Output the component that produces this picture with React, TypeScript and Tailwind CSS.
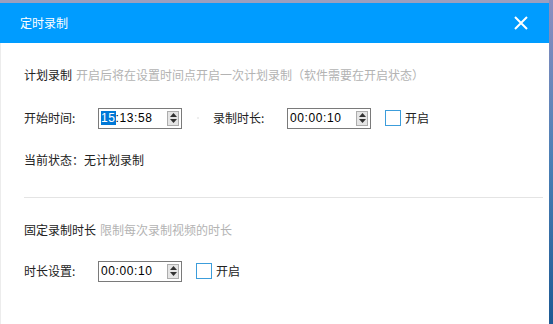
import React from "react";

const font = { fontFamily: '"Noto Sans CJK SC", "Noto Sans", sans-serif' };

function Spin({ value, highlight }: { value: string; highlight?: boolean }) {
  return (
    <div className="flex h-[21px] w-[84px] items-center border border-[#7a7a7a] bg-white pl-[2px] pr-[2px]">
      <div className="flex-1 text-[12px] leading-none tracking-[0.6px] text-black" style={{ fontFamily: '"Liberation Sans", Arial, sans-serif' }}>
        {highlight ? (
          <>
            <span className="bg-[#0078d7] text-white">15</span>:13:58
          </>
        ) : (
          value
        )}
      </div>
      <div className="flex h-[15px] w-[12px] flex-col items-center justify-center gap-[2px] border border-[#adadad] bg-[#e5e5e5]">
        <svg width="7" height="4" viewBox="0 0 7 4"><path d="M0 4 L3.5 0 L7 4 Z" fill="#333" /></svg>
        <svg width="7" height="4" viewBox="0 0 7 4"><path d="M0 0 L3.5 4 L7 0 Z" fill="#333" /></svg>
      </div>
    </div>
  );
}

function Check() {
  return (
    <div className="flex items-center gap-[4px]">
      <div className="h-[16px] w-[16px] border border-[#3c9ddb] bg-white" />
      <span className="text-[12px] text-[#222]">开启</span>
    </div>
  );
}

export default function App() {
  return (
    <div className="flex h-[324px] w-[553px] bg-white" style={font}>
      <div className="flex flex-1 flex-col border-t-[3px] border-[#9b9fbf]">
        <div className="flex h-[40px] items-center justify-between bg-[#009cff] pl-[20px] pr-[21px]">
          <span className="text-[12px] text-white">定时录制</span>
          <svg width="14" height="14" viewBox="0 0 14 14">
            <path d="M1 1 L13 13 M13 1 L1 13" stroke="white" strokeWidth="2" />
          </svg>
        </div>
        <div className="flex flex-1 flex-col border-l border-[#ececec] pl-[23px] pr-[6px] text-[12px] text-[#222]">
          <div className="mt-[23px] flex h-[18px] items-center">
            <span>计划录制</span>
            <span className="ml-[4px] text-[#b3b3b3]">开启后将在设置时间点开启一次计划录制（软件需要在开启状态）</span>
          </div>
          <div className="mt-[23px] flex h-[22px] items-center">
            <span className="w-[74px]">开始时间:</span>
            <Spin value="15:13:58" highlight />
            <span className="ml-[15px] mr-[14px] h-[2px] w-[2px] bg-[#eeeeee]" />
            <span className="w-[74px]">录制时长:</span>
            <Spin value="00:00:10" />
            <div className="ml-[14px]">
              <Check />
            </div>
          </div>
          <div className="mt-[22px] flex h-[18px] items-center">当前状态：无计划录制</div>
          <div className="mt-[28px] h-px w-[519px] bg-[#e4e4e4]" />
          <div className="mt-[23px] flex h-[18px] items-center">
            <span>固定录制时长</span>
            <span className="ml-[4px] text-[#b3b3b3]">限制每次录制视频的时长</span>
          </div>
          <div className="mt-[21px] flex h-[22px] items-center">
            <span className="w-[74px]">时长设置:</span>
            <Spin value="00:00:10" />
            <div className="ml-[14px]">
              <Check />
            </div>
          </div>
        </div>
      </div>
      <div className="w-[4px] bg-gradient-to-b from-[#8a8fc0] via-[#4a7fb5] to-[#1c5a94]" />
    </div>
  );
}
